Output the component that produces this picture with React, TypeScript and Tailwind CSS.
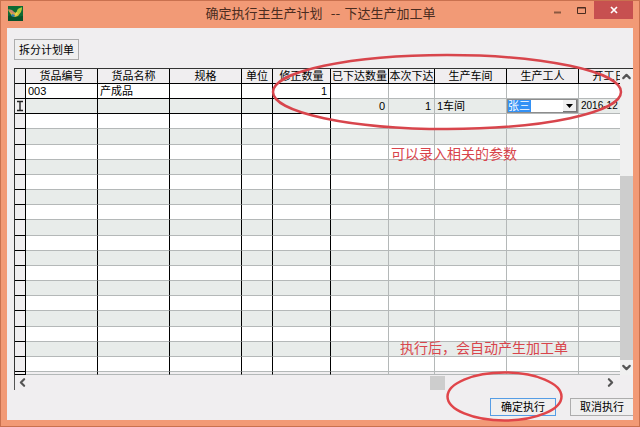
import React from 'react';
import { ChevronDown, ChevronLeft, ChevronRight, ChevronUp } from 'lucide-react';

interface Column {
  title: string;
  width: string;
  locked: boolean;
}

const COLUMNS: Column[] = [
  { title: '货品编号', width: 'w-[72px]', locked: true },
  { title: '货品名称', width: 'w-[72px]', locked: true },
  { title: '规格', width: 'w-[72px]', locked: true },
  { title: '单位', width: 'w-[31px]', locked: true },
  { title: '修正数量', width: 'w-[58px]', locked: true },
  { title: '已下达数量', width: 'w-[58px]', locked: false },
  { title: '本次下达', width: 'w-[46px]', locked: false },
  { title: '生产车间', width: 'w-[72px]', locked: false },
  { title: '生产工人', width: 'w-[72px]', locked: false },
  { title: '开工日期', width: '', locked: false },
];

const ROWS: string[][] = [
  ['003', '产成品', '', '', '1', '', '', '', '', ''],
  ['', '', '', '', '', '0', '1', '1车间', '张三', '2016-12'],
  ...Array.from({ length: 17 }, () => Array<string>(10).fill('')),
];

const RIGHT_ALIGNED = [4, 5, 6];

const AppIcon = () => (
  <svg viewBox="0 0 15 15" className="h-[15px] w-[15px] shrink-0" aria-hidden="true">
    <rect width="15" height="15" fill="#0d6a34" />
    <path d="M0 10l4-1 4 2 7-1v5H0z" fill="#08512a" />
    <path d="M0 4l3 1 3 1 2 1 2-4 4-1-1 4-3 4-3 1-3-1-2-3z" fill="#d9b43a" />
    <path d="M0 3l4 1 3 3-2 1-3-2z" fill="#c98a6a" />
    <path d="M10 3l4-2-1 4-3 3-1-2z" fill="#a6cf3c" />
    <path d="M4 8l3 1-1 2-3-1z" fill="#2c7fb0" />
    <path d="M8 6l2 1-2 3-1-1z" fill="#e6dc4a" />
  </svg>
);

const TitleBar = () => (
  <header className="flex h-[27px] items-start">
    <div className="flex flex-1 pt-[5px] pl-px">
      <AppIcon />
    </div>
    <h1 className="shrink-0 pt-[3px] font-['DejaVu_Sans','Noto_Sans_CJK_SC',sans-serif] text-[13px] leading-5 whitespace-pre text-[#4a2c20]">
      确定执行主生产计划  -- 下达生产加工单
    </h1>
    <div className="flex flex-1 justify-end">
      <button aria-label="最小化" className="flex h-[17px] w-6 items-center justify-center">
        <svg viewBox="0 0 10 10" className="h-[10px] w-[10px]"><path d="M1 7.5h7" stroke="#8a5840" strokeWidth="2" /></svg>
      </button>
      <button aria-label="最大化" className="flex h-[17px] w-6 items-center justify-center">
        <svg viewBox="0 0 10 10" className="h-[10px] w-[10px]"><path d="M.5 2.5h8v6h-8zM.5 3h8" fill="none" stroke="#4a2c20" /></svg>
      </button>
      <button aria-label="关闭" className="flex h-[18px] w-[39px] items-center justify-center bg-[#c75050]">
        <svg viewBox="0 0 10 10" className="h-[10px] w-[10px]"><path d="M2 2l6 6M8 2l-6 6" stroke="#fff" strokeWidth="1.7" /></svg>
      </button>
    </div>
  </header>
);

const WorkerSelect = ({ value }: { value: string }) => (
  <div className="relative flex h-[14px] items-center border border-[#8d8d8d] bg-white">
    <select
      aria-label="生产工人"
      defaultValue={value}
      className="h-3 w-[23px] appearance-none bg-[#3391f5] text-[11px] leading-3 text-white"
    >
      <option>{value}</option>
    </select>
    <span className="pointer-events-none ml-auto flex h-3 w-[14px] items-center justify-center border-r border-b border-[#777] bg-[#f0f0f0]">
      <svg viewBox="0 0 7 4" className="h-1 w-[7px]"><path d="M0 0h7L3.5 4z" fill="#000" /></svg>
    </span>
  </div>
);

const PlanTable = () => (
  <table className="h-[306px] w-[636px] min-w-full table-fixed border-separate border-spacing-0 text-[11px] leading-[14px]">
    <thead>
      <tr className="h-[15px]">
        <th className="w-[11px] border-r border-b border-black bg-[#f0eef0] p-0" />
        {COLUMNS.map((col) => (
          <th
            key={col.title}
            className={`${col.width} border-r border-b border-black bg-[#f0eef0] p-0 text-center font-normal whitespace-nowrap`}
          >
            {col.title}
          </th>
        ))}
      </tr>
    </thead>
    <tbody>
      {ROWS.map((row, r) => (
        <tr key={r} className={r % 2 ? 'h-[15px] bg-[#e8ecea]' : 'h-[15px] bg-white'}>
          <td className="border-r border-b border-black bg-[#f0eef0] p-0">
            {r === 1 && (
              <svg viewBox="0 0 10 12" className="mx-auto block h-3 w-[10px]">
                <path d="M2 1.5h2.5l.5.5.5-.5H8M2 10.5h2.5l.5-.5.5.5H8M5 2v8" fill="none" stroke="#222" strokeWidth="1.4" />
              </svg>
            )}
          </td>
          {row.map((cell, c) => {
            const locked = COLUMNS[c].locked;
            const isSelect = r === 1 && c === 8;
            return (
              <td
                key={c}
                className={`border-r border-b py-0 whitespace-nowrap ${
                  locked ? 'border-r-black' : 'border-r-[#b4b8b8]'
                } ${locked && r < 2 ? 'border-b-black' : 'border-b-[#b4b8b8]'} ${
                  RIGHT_ALIGNED.includes(c) ? 'pr-[3px] pl-0 text-right' : isSelect ? 'px-0' : 'pr-0 pl-[2px]'
                } ${c === 9 ? 'text-[10px]' : ''}`}
              >
                {isSelect ? <WorkerSelect value={cell} /> : cell}
              </td>
            );
          })}
        </tr>
      ))}
      {/* 底部只露出一点的下一行 */}
      <tr className="h-[3px] bg-[#f0eef0]">
        <td className="border-r border-b border-black p-0" />
        {COLUMNS.map((col) => (
          <td
            key={col.title}
            className={`border-r border-b border-b-[#b4b8b8] p-0 ${col.locked ? 'border-r-black' : 'border-r-[#b4b8b8]'}`}
          />
        ))}
      </tr>
    </tbody>
  </table>
);

const VerticalScroll = () => (
  <div className="flex w-[13px] shrink-0 flex-col items-center bg-[#f0f0f0] text-[#555]">
    <button aria-label="向上" className="flex h-[15px] items-center"><ChevronUp size={13} strokeWidth={4} /></button>
    <div className="flex-1" />
    <div className="h-[184px] w-full bg-[#cdcdcd]" />
    <button aria-label="向下" className="flex h-[15px] items-center"><ChevronDown size={13} strokeWidth={4} /></button>
  </div>
);

const HorizontalScroll = () => (
  <div className="mr-[13px] flex h-[15px] items-center border-l border-[#555] text-[#555]">
    <button aria-label="向左" className="w-[15px] pl-px"><ChevronLeft size={13} strokeWidth={4} /></button>
    <div className="flex-1" />
    <div className="h-[14px] w-[15px] bg-[#cdcdcd]" />
    <div className="w-[159px]" />
    <button aria-label="向右" className="w-4"><ChevronRight size={13} strokeWidth={4} /></button>
  </div>
);

export default function App() {
  return (
    <div className="relative flex min-h-screen flex-col overflow-hidden border border-[#c9714f] bg-[#f29a76] px-[6px] pb-[6px] font-['Liberation_Sans','Noto_Sans_CJK_SC',sans-serif] text-black">
      <TitleBar />
      <main className="flex flex-1 flex-col bg-[#f0eef0]">
        <div className="flex px-[7px] pt-[11px] pb-2">
          <button className="h-[21px] w-[65px] border border-[#adadad] bg-[#efefef] text-[11px] leading-4">拆分计划单</button>
        </div>
        <div className="ml-[7px]">
          <div className="flex border-t border-l border-[#333]">
            <div className="min-w-0 flex-1 overflow-hidden">
              <PlanTable />
            </div>
            <VerticalScroll />
          </div>
          <HorizontalScroll />
        </div>
        <div className="flex justify-end gap-[14px] pt-2">
          <button className="h-[18px] w-[66px] border border-[#569de5] bg-[#efefef] text-[11px] leading-4">确定执行</button>
          <button className="h-[18px] w-[63px] border border-r-0 border-[#adadad] bg-[#efefef] text-[11px] leading-4">取消执行</button>
        </div>
      </main>

      {/* 批注 */}
      <svg viewBox="0 0 640 427" className="pointer-events-none absolute -top-px -left-px h-[427px] w-[640px]" aria-hidden="true">
        <ellipse cx="447" cy="92" rx="174" ry="37" fill="none" stroke="#d8454c" strokeWidth="2.5" />
        <ellipse cx="504.5" cy="396.5" rx="57" ry="24" fill="none" stroke="#e0454a" strokeWidth="2.5" />
      </svg>
      <p className="absolute top-[143px] left-[390px] text-[14px] leading-5 text-[#d8454c]">可以录入相关的参数</p>
      <p className="absolute top-[337px] left-[399px] text-[14px] leading-5 text-[#d8454c]">执行后，会自动产生加工单</p>
    </div>
  );
}
